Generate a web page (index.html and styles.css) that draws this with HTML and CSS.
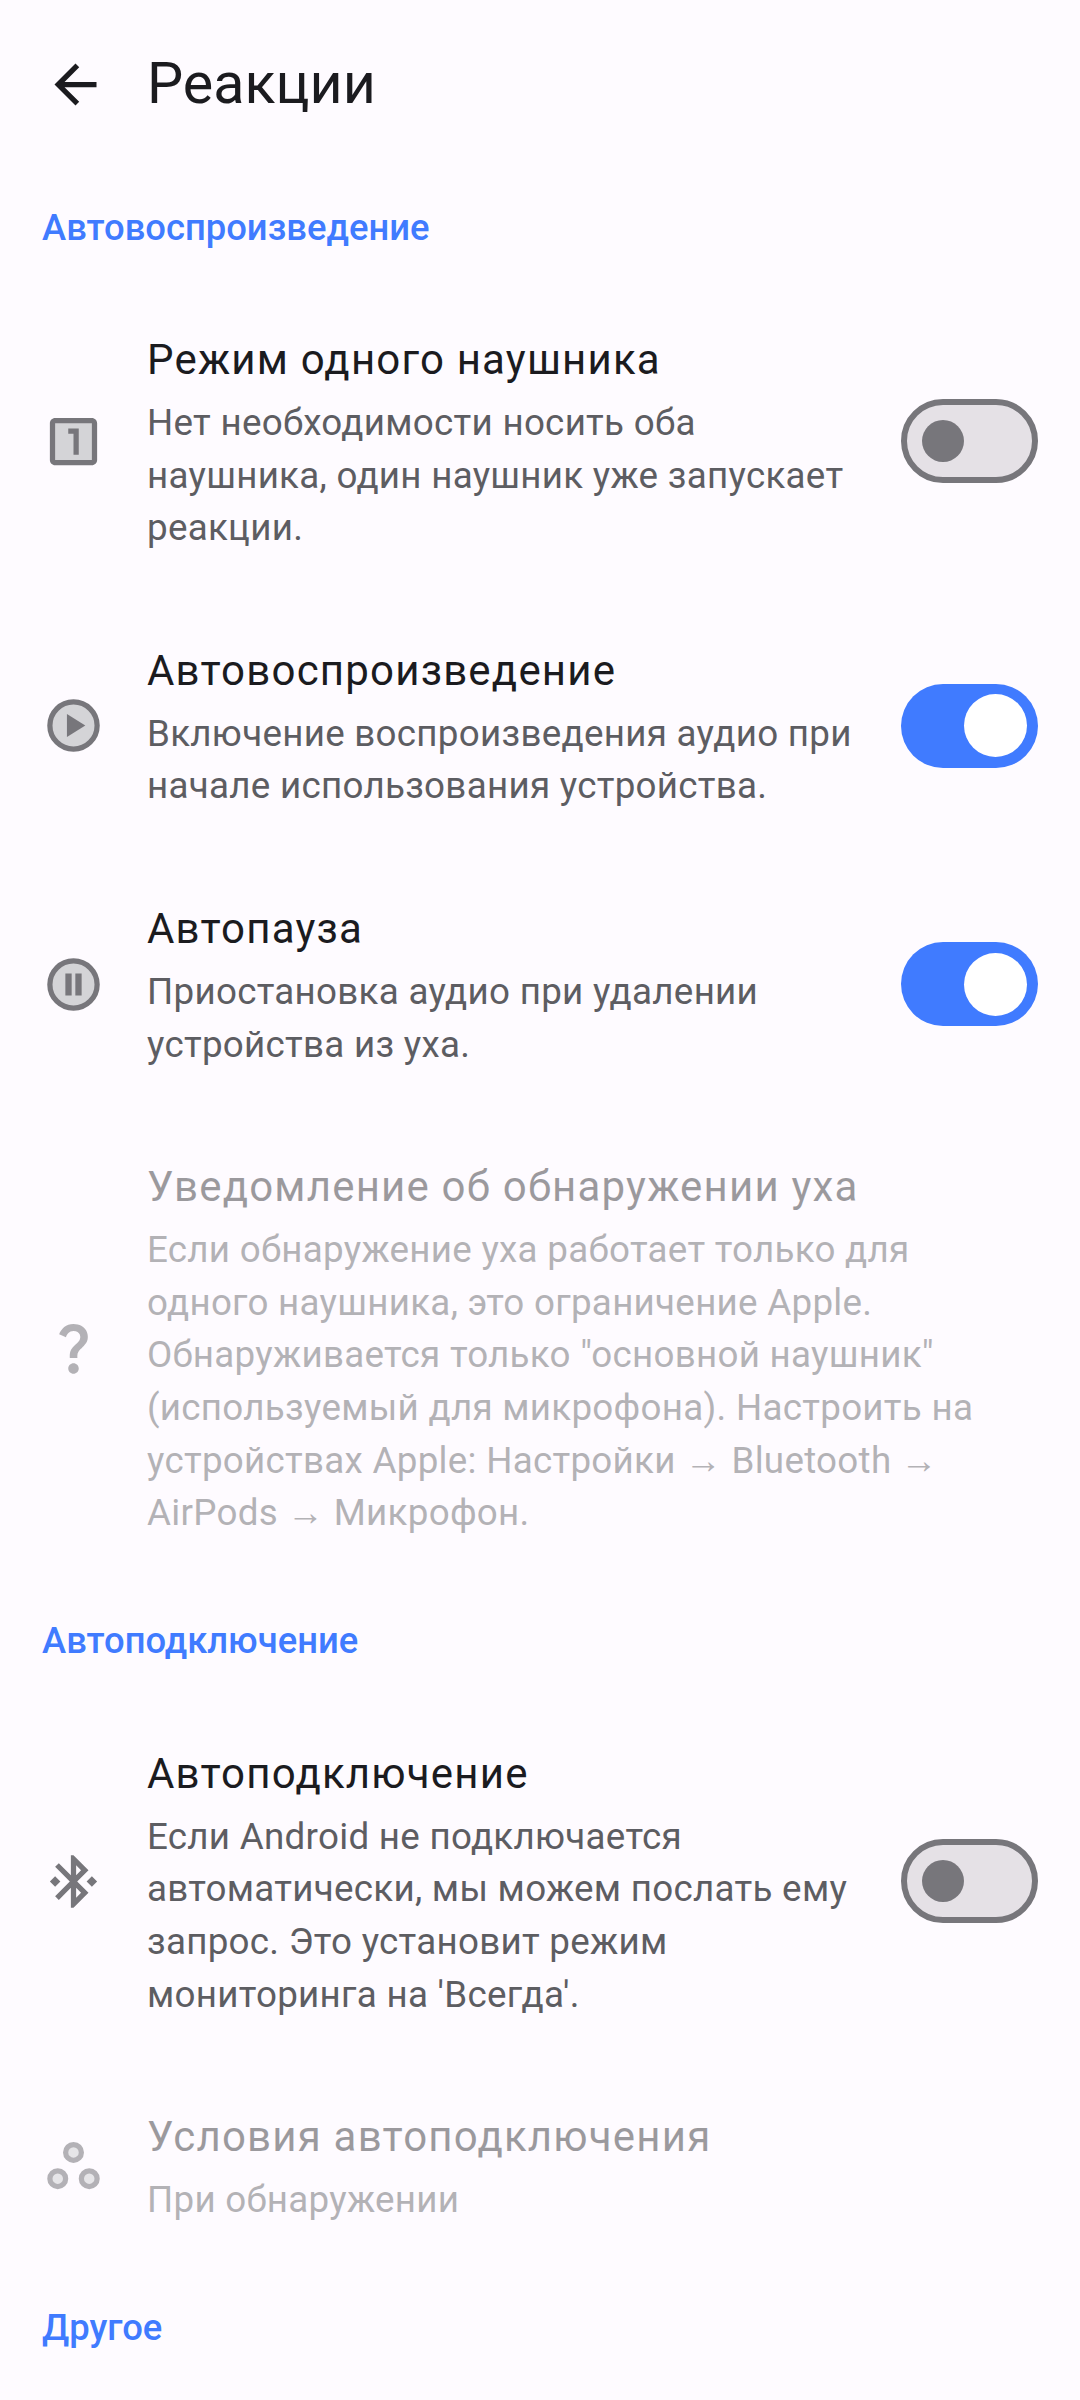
FILE: index.html
```html
<!DOCTYPE html>
<html lang="ru">
<head>
<meta charset="utf-8">
<title>Реакции</title>
<link rel="stylesheet" href="styles.css">
</head>
<body>
<header class="topbar">
  <svg class="back" viewBox="0 0 24 24"><path d="M20 11H7.830l5.590-5.590L12 4l-8 8 8 8 1.410-1.410L7.830 13H20v-2z"/></svg>
  <h1>Реакции</h1>
</header>
<h2 class="section">Автовоспроизведение</h2>
<section class="row">
  <svg class="ico" viewBox="0 0 24 24"><rect class="tone" x="4" y="4" width="16" height="16"/><path class="solid" d="M19 3H5c-1.100 0-2 .9-2 2v14c0 1.100.9 2 2 2h14c1.100 0 2-.9 2-2V5c0-1.100-.9-2-2-2zm0 16H5V5h14v14z"/><path class="solid" d="M14 17h-2V9h-2V7h4v10z"/></svg>
  <div class="txt"><div class="t">Режим одного наушника</div><p>Нет необходимости носить оба наушника, один наушник уже запускает реакции.</p></div>
  <div class="sw off"><i></i></div>
</section>
<section class="row">
  <svg class="ico" viewBox="0 0 24 24"><circle class="ring" cx="12" cy="12" r="9"/><path class="solid" d="M9.500 7.600l7 4.400-7 4.400z"/></svg>
  <div class="txt"><div class="t">Автовоспроизведение</div><p>Включение воспроизведения аудио при начале использования устройства.</p></div>
  <div class="sw on"><i></i></div>
</section>
<section class="row">
  <svg class="ico" viewBox="0 0 24 24"><circle class="ring" cx="12" cy="12" r="9"/><path class="solid" d="M8.900 7.800h2.400v8.400H8.900zM12.700 7.800h2.400v8.400h-2.400z"/></svg>
  <div class="txt"><div class="t">Автопауза</div><p>Приостановка аудио при удалении устройства из уха.</p></div>
  <div class="sw on"><i></i></div>
</section>
<section class="row dis">
  <svg class="ico" viewBox="0 0 24 24"><path class="solid" d="M11.070 12.850c.77-1.390 2.250-2.210 3.110-3.440.91-1.290.4-3.700-2.180-3.700-1.690 0-2.520 1.280-2.870 2.340L6.540 6.960C7.250 4.830 9.180 3 11.990 3c2.350 0 3.960 1.070 4.780 2.410.7 1.150 1.110 3.300.03 4.900-1.200 1.770-2.350 2.310-2.970 3.450-.25.46-.35.76-.35 2.240h-2.890c-.01-.78-.13-2.050.48-3.150zM14 20c0 1.100-.9 2-2 2s-2-.9-2-2 .9-2 2-2 2 .9 2 2z"/></svg>
  <div class="txt"><div class="t">Уведомление об обнаружении уха</div><p>Если обнаружение уха работает только для одного наушника, это ограничение Apple. Обнаруживается только "основной наушник" (используемый для микрофона). Настроить на устройствах Apple: Настройки → Bluetooth → AirPods → Микрофон.</p></div>
</section>
<h2 class="section">Автоподключение</h2>
<section class="row">
  <svg class="ico" viewBox="0 0 24 24"><path class="solid" d="M7 12l-2-2-2 2 2 2 2-2zm10.710-4.290L12 2h-1v7.590L6.410 5 5 6.410 10.590 12 5 17.590 6.410 19 11 14.410V22h1l5.710-5.710-4.300-4.290 4.300-4.290zM13 5.830l1.880 1.880L13 9.590V5.830zm1.880 10.460L13 18.170v-3.760l1.880 1.880zM19 10l-2 2 2 2 2-2-2-2z"/></svg>
  <div class="txt"><div class="t">Автоподключение</div><p>Если Android не подключается автоматически, мы можем послать ему запрос. Это установит режим мониторинга на 'Всегда'.</p></div>
  <div class="sw off"><i></i></div>
</section>
<section class="row dis">
  <svg class="ico" viewBox="0 0 24 24"><circle class="ring" cx="12" cy="7" r="3"/><circle class="ring" cx="6" cy="17" r="3"/><circle class="ring" cx="18" cy="17" r="3"/></svg>
  <div class="txt"><div class="t">Условия автоподключения</div><p>При обнаружении</p></div>
</section>
<h2 class="section">Другое</h2>
</body>
</html>
```
FILE: styles.css
```css
html, body { margin: 0; padding: 0; background: #fefbff; }
body { width: 1080px; height: 2400px; overflow: hidden; font-family: Roboto, sans-serif; color: #1b1b1f; }
.topbar { display: flex; align-items: center; height: 168px; padding-left: 44px; gap: 40px; box-sizing: border-box; }
.topbar h1 { margin: 0; font-size: 57.4px; font-weight: 400; line-height: 1.2; }
.back { width: 63px; height: 63px; fill: #1b1b1f; flex: none; }
.section { display: flex; align-items: center; height: 118px; margin: 0; padding-left: 42px; font-size: 36.4px; font-weight: 500; color: #407bff; }
.row { display: flex; align-items: center; padding: 42px 42px; }
.ico { width: 63px; height: 63px; flex: none; margin-right: 42px; }
.solid { fill: #77767b; }
.tone { fill: #d4d4d7; }
.ring { fill: #d4d4d7; stroke: #77767b; stroke-width: 2; }
.txt { width: 720px; flex: none; }
.t { font-size: 42px; letter-spacing: 1.2px; line-height: 63px; }
.txt p { margin: 6px 0 0; font-size: 36.75px; line-height: 52.6px; letter-spacing: 0.28px; color: #5d5d62; }
.sw { margin-left: auto; width: 137px; height: 84px; border-radius: 42px; box-sizing: border-box; display: flex; align-items: center; flex: none; }
.sw.off { background: #e5e1e6; border: 6px solid #77767b; padding-left: 15px; }
.sw.off i { width: 42px; height: 42px; border-radius: 50%; background: #77767b; }
.sw.on { background: #407bff; justify-content: flex-end; padding-right: 11px; }
.sw.on i { width: 63px; height: 63px; border-radius: 50%; background: #fff; }
.dis .txt { width: 850px; }
.dis .t { opacity: 0.43; }
.dis p { opacity: 0.46; }
.dis .ico { opacity: 0.55; }
```
